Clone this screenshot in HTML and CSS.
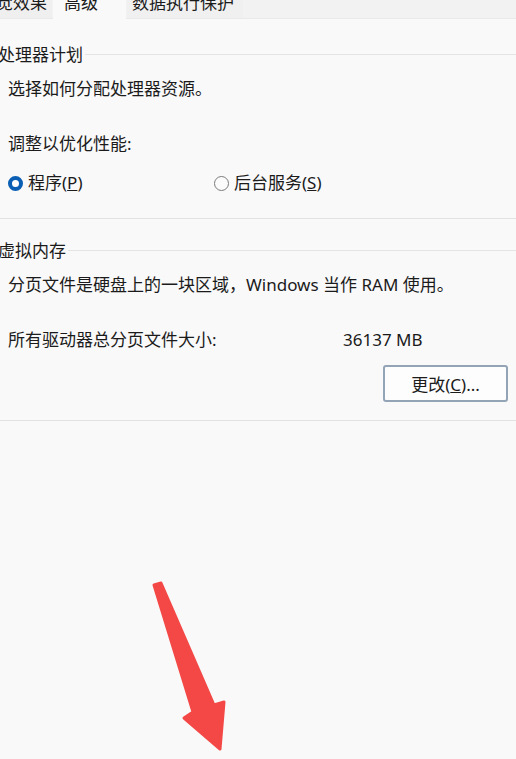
FILE: index.html
```html
<!DOCTYPE html>
<html lang="zh-CN">
<head>
<meta charset="utf-8">
<title>性能选项 - 高级</title>
<link rel="stylesheet" href="styles.css">
</head>
<body>
<div class="page">
  <div class="tabs">
    <div class="tab tab-first"><span class="tab-text">视觉效果</span></div>
    <div class="tab tab-active"><span class="tab-text">高级</span></div>
    <div class="tab tab-third"><span class="tab-text">数据执行保护</span></div>
    <div class="tab-rest"></div>
  </div>

  <section class="group group-cpu">
    <div class="group-head"><span class="group-title">处理器计划</span><span class="group-line"></span></div>
    <p class="row row-desc">选择如何分配处理器资源。</p>
    <p class="row row-label">调整以优化性能:</p>
    <div class="row radios">
      <label class="radio radio-first"><span class="dot dot-on"></span><span>程序(<u>P</u>)</span></label>
      <label class="radio"><span class="dot dot-off"></span><span>后台服务(<u>S</u>)</span></label>
    </div>
  </section>
  <div class="sep sep-a"></div>

  <section class="group group-vm">
    <div class="group-head"><span class="group-title">虚拟内存</span><span class="group-line"></span></div>
    <p class="row row-desc2">分页文件是硬盘上的一块区域，Windows 当作 RAM 使用。</p>
    <div class="row size-row"><span class="size-label">所有驱动器总分页文件大小:</span><span class="size-val">36137 MB</span></div>
    <div class="btn-row"><button class="btn" type="button">更改(<u>C</u>)...</button></div>
  </section>
  <div class="sep sep-b"></div>

  <svg class="arrow" width="516" height="759" viewBox="0 0 516 759">
    <polygon points="154,585 161,583 214,705 224,702 220,749 184,718 193,712" fill="#f34846" stroke="#f34846" stroke-width="3" stroke-linejoin="round"/>
  </svg>
</div>
</body>
</html>
```
FILE: styles.css
```css
html, body {
  margin: 0;
  padding: 0;
  background: #f9f9f9;
}
.page {
  position: relative;
  width: 516px;
  height: 759px;
  overflow: hidden;
  font-family: "Noto Sans", "Noto Sans CJK SC", sans-serif;
  font-size: 17px;
  color: #1b1b1b;
  background: #f9f9f9;
}
.tabs {
  display: flex;
  height: 18px;
  background: #f2f2f2;
  border-bottom: 1px solid #e9e9e9;
}
.tab {
  height: 18px;
  overflow: hidden;
  background: #efefef;
}
.tab-text {
  display: block;
  margin-top: -7px;
  line-height: 20px;
  white-space: nowrap;
}
.tab-first {
  width: 52px;
  display: flex;
  justify-content: flex-end;
}
.tab-first .tab-text {
  padding-right: 5px;
}
.tab-active {
  width: 73px;
  height: 21px;
  margin-left: 1px;
  margin-right: 1px;
  background: #f9f9f9;
  position: relative;
  z-index: 1;
}
.tab-active .tab-text {
  padding-left: 11px;
}
.tab-third {
  width: 116px;
  background: #f0f0f0;
}
.tab-third .tab-text {
  padding-left: 5px;
}
.tab-rest {
  flex: 1;
}
.group {
  padding-left: 8px;
}
.group-head {
  display: flex;
  align-items: center;
  margin-left: -10px;
  height: 20px;
  line-height: 20px;
}
.group-title {
  white-space: nowrap;
  padding-right: 2px;
}
.group-line {
  flex: 1;
  height: 1px;
  background: #e4e4e4;
  margin-top: -2px;
}
.group-cpu {
  padding-top: 26px;
}
.row {
  margin: 0;
  height: 20px;
  line-height: 20px;
  white-space: nowrap;
}
.row-desc {
  margin-top: 14px;
}
.row-label {
  margin-top: 35px;
}
.radios {
  display: flex;
  align-items: center;
  margin-top: 19px;
}
.radio {
  display: flex;
  align-items: center;
  gap: 5px;
}
.radio-first {
  width: 206px;
}
.dot {
  box-sizing: border-box;
  width: 15px;
  height: 15px;
  border-radius: 50%;
  display: inline-block;
}
.dot-on {
  border: 4.5px solid #0a5fb4;
  background: #ffffff;
}
.dot-off {
  border: 1.5px solid #7b7b7b;
  background: #fbfbfb;
}
.sep {
  height: 1px;
  background: #e2e2e2;
}
.sep-a {
  margin-top: 25px;
}
.group-vm {
  padding-top: 22px;
}
.row-desc2 {
  margin-top: 14px;
}
.size-row {
  display: flex;
  margin-top: 35px;
}
.size-label {
  width: 335px;
}
.btn-row {
  display: flex;
  justify-content: flex-end;
  padding-right: 8px;
  margin-top: 15px;
}
.btn {
  box-sizing: border-box;
  width: 125px;
  height: 37px;
  border: 2px solid #93a4b6;
  border-radius: 3px;
  background: #fdfdfd;
  font-family: "Noto Sans", "Noto Sans CJK SC", sans-serif;
  font-size: 17px;
  color: #1b1b1b;
  padding: 0;
}
.sep-b {
  margin-top: 18px;
}
.arrow {
  position: absolute;
  left: 0;
  top: 0;
  pointer-events: none;
}
```
